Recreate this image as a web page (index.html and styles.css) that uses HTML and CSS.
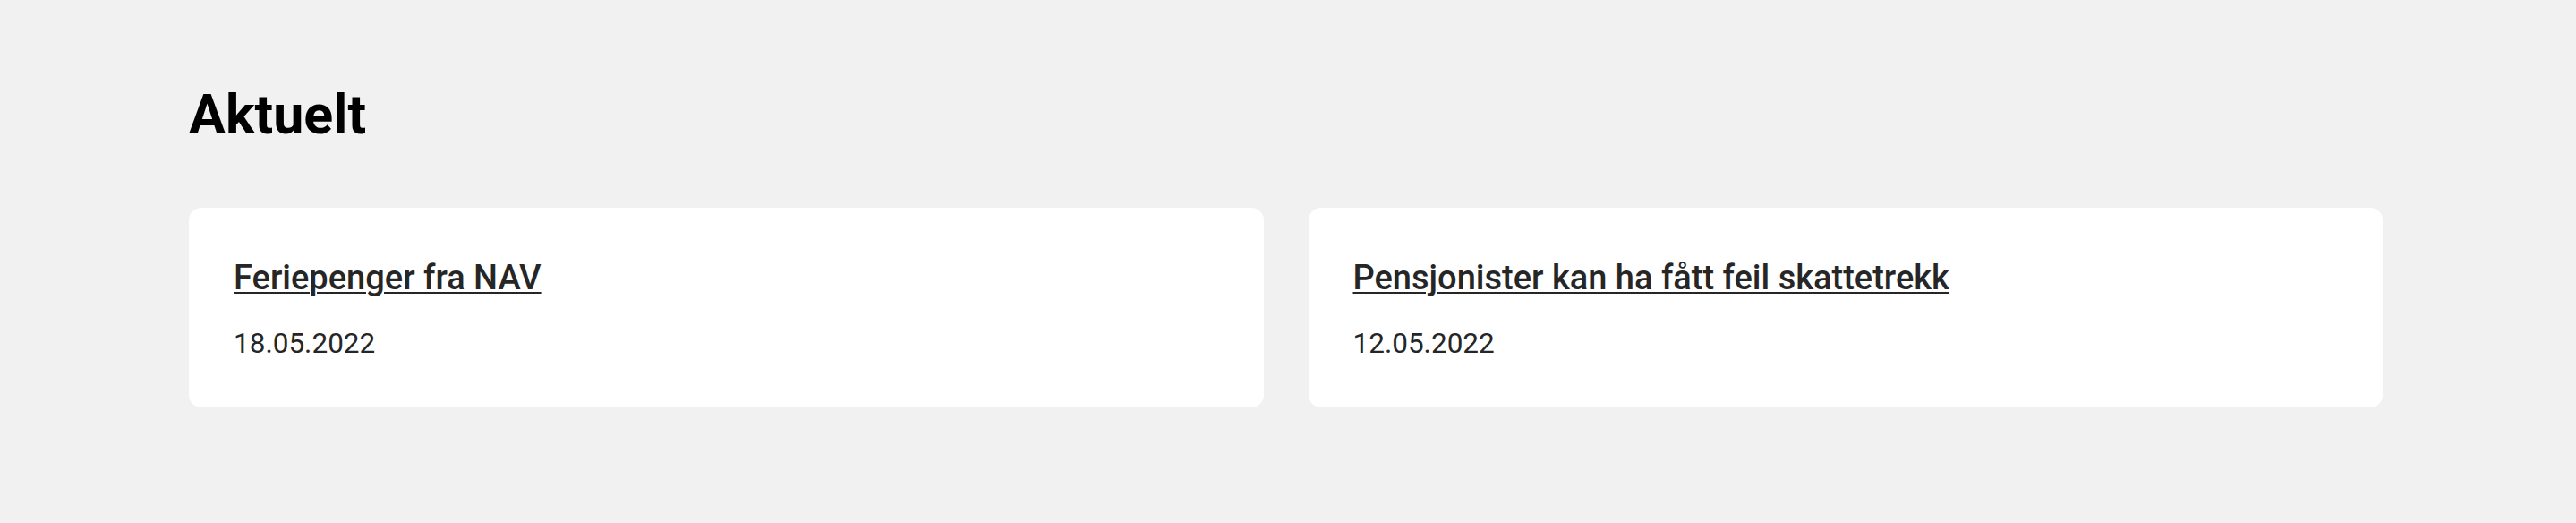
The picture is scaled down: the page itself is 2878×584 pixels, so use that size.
FILE: index.html
```html
<!DOCTYPE html>
<html lang="no">
<head>
<meta charset="utf-8">
<title>Aktuelt</title>
<link rel="stylesheet" href="styles.css">
</head>
<body>
<section class="news">
  <h2 class="news-heading">Aktuelt</h2>
  <div class="news-grid">
    <article class="news-card">
      <a class="news-title" href="#">Feriepenger fra NAV</a>
      <p class="news-date">18.05.2022</p>
    </article>
    <article class="news-card">
      <a class="news-title" href="#">Pensjonister kan ha fått feil skattetrekk</a>
      <p class="news-date">12.05.2022</p>
    </article>
  </div>
</section>
</body>
</html>
```

FILE: styles.css
```css
html, body {
  margin: 0;
  padding: 0;
}
body {
  background: #f1f1f1;
  font-family: Roboto, "Liberation Sans", sans-serif;
  color: #262626;
  width: 2878px;
  height: 584px;
  overflow: hidden;
}
.news {
  padding: 91px 216px 0 211px;
}
.news-heading {
  margin: 0 0 67px 0;
  font-size: 61px;
  line-height: 74px;
  font-weight: 700;
  color: #000;
}
.news-grid {
  display: grid;
  grid-template-columns: 1fr 1fr;
  column-gap: 50px;
}
.news-card {
  background: #fff;
  border-radius: 14px;
  padding: 54px 50px 51px 50px;
  display: flex;
  flex-direction: column;
  align-items: flex-start;
}
.news-title {
  font-size: 38px;
  line-height: 48px;
  font-weight: 500;
  color: #262626;
  text-decoration: underline;
  text-decoration-thickness: 2px;
  text-underline-offset: 3px;
}
.news-date {
  margin: 30px 0 0 0;
  font-size: 31.5px;
  line-height: 40px;
  color: #262626;
}
```
